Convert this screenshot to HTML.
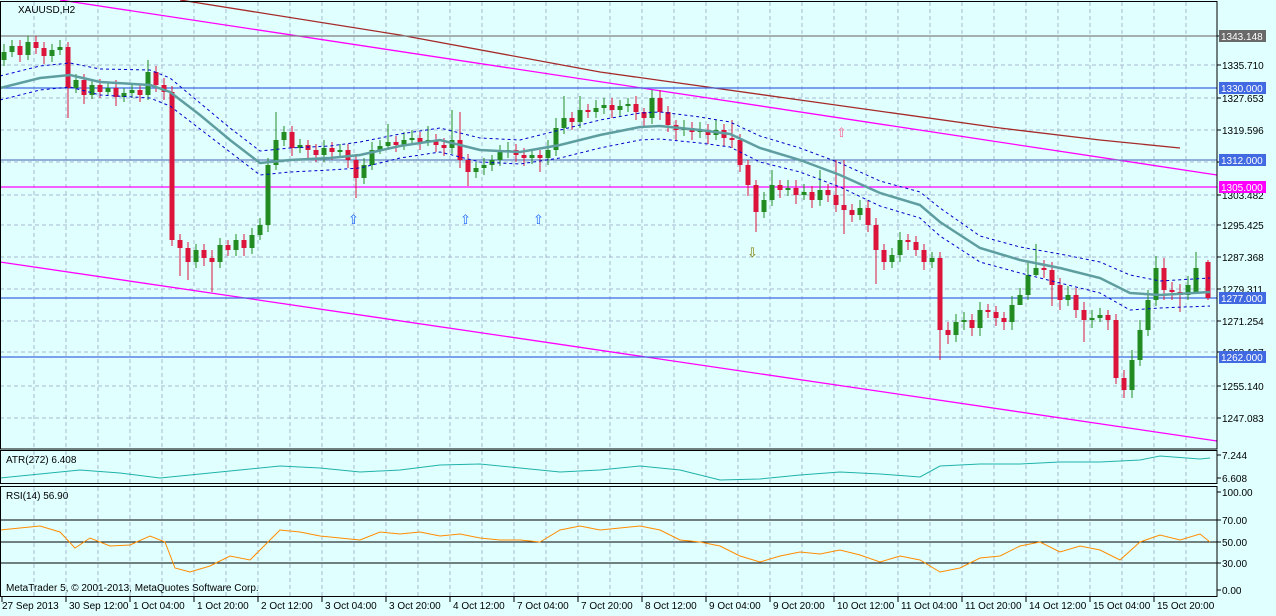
<!DOCTYPE html>
<html><head><meta charset="utf-8"><style>
html,body{margin:0;padding:0;background:#e0ffff;}
svg{display:block;font-family:"Liberation Sans",sans-serif;font-size:10px;}
</style></head><body>
<svg width="1276" height="616" xmlns="http://www.w3.org/2000/svg">
<g stroke="#a9b9d0" stroke-dasharray="4 3">
<path d="M34 2V449M66 2V449M98 2V449M130 2V449M162 2V449M194 2V449M226 2V449M258 2V449M290 2V449M322 2V449M354 2V449M386 2V449M418 2V449M450 2V449M482 2V449M514 2V449M546 2V449M578 2V449M610 2V449M642 2V449M674 2V449M706 2V449M738 2V449M770 2V449M802 2V449M834 2V449M866 2V449M898 2V449M930 2V449M962 2V449M994 2V449M1026 2V449M1058 2V449M1090 2V449M1122 2V449M1154 2V449M1186 2V449"/>
<path d="M34 451V483M66 451V483M98 451V483M130 451V483M162 451V483M194 451V483M226 451V483M258 451V483M290 451V483M322 451V483M354 451V483M386 451V483M418 451V483M450 451V483M482 451V483M514 451V483M546 451V483M578 451V483M610 451V483M642 451V483M674 451V483M706 451V483M738 451V483M770 451V483M802 451V483M834 451V483M866 451V483M898 451V483M930 451V483M962 451V483M994 451V483M1026 451V483M1058 451V483M1090 451V483M1122 451V483M1154 451V483M1186 451V483"/>
<path d="M34 487V596M66 487V596M98 487V596M130 487V596M162 487V596M194 487V596M226 487V596M258 487V596M290 487V596M322 487V596M354 487V596M386 487V596M418 487V596M450 487V596M482 487V596M514 487V596M546 487V596M578 487V596M610 487V596M642 487V596M674 487V596M706 487V596M738 487V596M770 487V596M802 487V596M834 487V596M866 487V596M898 487V596M930 487V596M962 487V596M994 487V596M1026 487V596M1058 487V596M1090 487V596M1122 487V596M1154 487V596M1186 487V596"/>
<path d="M0 65H1217M0 98H1217M0 130H1217M0 162H1217M0 195H1217M0 225H1217M0 257H1217M0 289H1217M0 321H1217M0 352H1217M0 386H1217M0 418H1217"/>
</g>
<g fill="none" stroke-width="1.3">
<line x1="60" y1="0" x2="1217" y2="175" stroke="#ff00ff"/>
<line x1="0" y1="262" x2="1217" y2="441" stroke="#ff00ff"/>
<polyline points="180,0 400,35 600,72 800,100 1000,128 1100,140 1180,148" stroke="#a52a2a"/>
<line x1="0" y1="36" x2="1217" y2="36" stroke="#808080"/>
<line x1="0" y1="88" x2="1217" y2="88" stroke="#4169e1"/>
<line x1="0" y1="160" x2="1217" y2="160" stroke="#6080c0"/>
<line x1="0" y1="187" x2="1217" y2="187" stroke="#ff00ff"/>
<line x1="0" y1="298" x2="1217" y2="298" stroke="#4169e1"/>
<line x1="0" y1="357" x2="1217" y2="357" stroke="#4169e1"/>
</g>
<!-- wicks -->
<path stroke="#228b22" fill="none" d="M4 44V66M12 40V57M28 36V60M52 44V62M60 40V55M76 74V93M92 79V99M108 82V96M124 88V102M132 84V98M148 60V100M196 244V268M220 238V268M236 234V256M252 228V254M260 218V240M268 158V232M276 112V170M284 126V146M300 139V153M324 140V162M340 144V158M364 158V184M372 142V170M380 140V154M388 124V150M404 132V150M412 130V144M428 126V146M452 110V154M476 162V178M484 158V175M492 155V171M500 145V166M508 142V158M532 149V164M548 140V165M556 118V156M564 96V134M580 96V128M596 100V118M604 98V114M620 100V116M628 98V112M652 90V124M684 120V136M700 122V138M716 120V140M764 192V218M772 170V206M788 180V196M804 184V200M820 170V206M860 200V220M892 248V268M900 232V262M932 252V268M956 314V342M964 312V330M980 302V336M1012 296V330M1020 288V302M1028 262V300M1036 244V276M1068 286V306M1092 310V328M1100 308V322M1132 350V398M1140 320V366M1148 290V336M1156 256V306M1188 276V300M1196 252V292"/>
<path stroke="#dc143c" fill="none" d="M20 40V62M36 36V54M44 42V64M68 42V118M84 74V104M100 79V98M116 80V106M140 84V102M156 66V92M164 78V100M172 86V246M180 234V276M188 242V280M204 244V266M212 250V292M228 240V256M244 234V256M292 126V156M308 140V158M316 144V162M332 142V160M348 144V168M356 154V198M396 136V152M420 132V150M436 134V152M444 138V156M460 112V168M468 154V186M516 144V162M524 148V166M540 150V172M572 112V130M588 104V118M612 98V118M636 96V120M644 108V126M660 90V120M668 106V132M676 120V140M692 122V140M708 124V144M724 124V146M732 120V148M740 134V172M748 160V196M756 180V232M780 180V198M796 180V204M812 186V208M828 184V202M836 160V212M844 160V234M852 204V222M868 200V232M876 218V284M884 244V270M908 234V250M916 236V256M924 244V270M940 252V360M948 322V344M972 314V336M988 304V318M996 306V326M1004 312V330M1044 260V278M1052 262V306M1060 278V310M1076 288V318M1084 302V342M1108 310V330M1116 314V384M1124 370V398M1164 258V300M1172 282V300M1180 284V312M1208 260V300"/>
<!-- bodies -->
<path fill="#228b22" d="M1.5 52h5v8h-5zM9.5 46h5v6h-5zM25.5 42h5v13h-5zM49.5 50h5v6h-5zM57.5 47h5v3h-5zM73.5 80h5v8h-5zM89.5 85h5v10h-5zM105.5 88h5v4h-5zM121.5 93h5v4h-5zM129.5 90h5v3h-5zM145.5 72h5v23h-5zM193.5 250h5v12h-5zM217.5 245h5v17h-5zM233.5 240h5v10h-5zM249.5 235h5v13h-5zM257.5 225h5v10h-5zM265.5 165h5v60h-5zM273.5 140h5v25h-5zM281.5 132h5v8h-5zM297.5 145h5v3h-5zM321.5 148h5v7h-5zM337.5 150h5v2h-5zM361.5 165h5v13h-5zM369.5 150h5v15h-5zM377.5 146h5v4h-5zM385.5 142h5v4h-5zM401.5 140h5v5h-5zM409.5 138h5v2h-5zM425.5 140h5v2h-5zM449.5 140h5v8h-5zM473.5 168h5v4h-5zM481.5 165h5v3h-5zM489.5 160h5v5h-5zM497.5 152h5v8h-5zM505.5 150h5v2h-5zM529.5 155h5v3h-5zM545.5 150h5v8h-5zM553.5 128h5v22h-5zM561.5 118h5v10h-5zM577.5 110h5v12h-5zM593.5 108h5v4h-5zM601.5 105h5v3h-5zM617.5 106h5v4h-5zM625.5 104h5v2h-5zM649.5 98h5v20h-5zM681.5 128h5v2h-5zM697.5 130h5v2h-5zM713.5 130h5v5h-5zM761.5 200h5v12h-5zM769.5 185h5v15h-5zM785.5 188h5v2h-5zM801.5 192h5v3h-5zM817.5 190h5v10h-5zM857.5 208h5v7h-5zM889.5 255h5v7h-5zM897.5 240h5v15h-5zM929.5 258h5v4h-5zM953.5 322h5v13h-5zM961.5 320h5v2h-5zM977.5 310h5v18h-5zM1009.5 305h5v17h-5zM1017.5 295h5v10h-5zM1025.5 275h5v20h-5zM1033.5 268h5v7h-5zM1065.5 295h5v5h-5zM1089.5 318h5v2h-5zM1097.5 315h5v3h-5zM1129.5 360h5v30h-5zM1137.5 330h5v30h-5zM1145.5 300h5v30h-5zM1153.5 268h5v32h-5zM1185.5 285h5v10h-5zM1193.5 268h5v24h-5z"/>
<path fill="#dc143c" d="M17.5 46h5v9h-5zM33.5 42h5v6h-5zM41.5 48h5v8h-5zM65.5 47h5v41h-5zM81.5 80h5v15h-5zM97.5 85h5v7h-5zM113.5 88h5v9h-5zM137.5 90h5v5h-5zM153.5 72h5v13h-5zM161.5 85h5v7h-5zM169.5 92h5v148h-5zM177.5 240h5v8h-5zM185.5 248h5v14h-5zM201.5 250h5v8h-5zM209.5 258h5v4h-5zM225.5 245h5v5h-5zM241.5 240h5v8h-5zM289.5 132h5v16h-5zM305.5 145h5v5h-5zM313.5 150h5v5h-5zM329.5 148h5v4h-5zM345.5 150h5v10h-5zM353.5 160h5v18h-5zM393.5 142h5v3h-5zM417.5 138h5v4h-5zM433.5 140h5v5h-5zM441.5 145h5v3h-5zM457.5 140h5v20h-5zM465.5 160h5v12h-5zM513.5 150h5v5h-5zM521.5 155h5v3h-5zM537.5 155h5v3h-5zM569.5 118h5v4h-5zM585.5 110h5v2h-5zM609.5 105h5v5h-5zM633.5 104h5v8h-5zM641.5 112h5v6h-5zM657.5 98h5v14h-5zM665.5 112h5v13h-5zM673.5 125h5v5h-5zM689.5 128h5v4h-5zM705.5 130h5v5h-5zM721.5 130h5v8h-5zM729.5 138h5v2h-5zM737.5 140h5v25h-5zM745.5 165h5v20h-5zM753.5 185h5v27h-5zM777.5 185h5v5h-5zM793.5 188h5v7h-5zM809.5 192h5v8h-5zM825.5 190h5v5h-5zM833.5 195h5v10h-5zM841.5 205h5v5h-5zM849.5 210h5v5h-5zM865.5 208h5v17h-5zM873.5 225h5v25h-5zM881.5 250h5v12h-5zM905.5 240h5v2h-5zM913.5 242h5v8h-5zM921.5 250h5v12h-5zM937.5 258h5v72h-5zM945.5 330h5v5h-5zM969.5 320h5v8h-5zM985.5 310h5v2h-5zM993.5 312h5v6h-5zM1001.5 318h5v4h-5zM1041.5 268h5v2h-5zM1049.5 270h5v15h-5zM1057.5 285h5v15h-5zM1073.5 295h5v15h-5zM1081.5 310h5v10h-5zM1105.5 315h5v5h-5zM1113.5 320h5v58h-5zM1121.5 378h5v12h-5zM1161.5 268h5v22h-5zM1169.5 290h5v2h-5zM1177.5 292h5v3h-5zM1205.5 262h5v36h-5z"/>
<!-- MA + bands -->
<g fill="none">
<polyline stroke="#5f9ea0" stroke-width="2.5" points="0,88 40,78 70,75 100,82 150,85 170,92 200,115 230,140 260,163 290,160 330,158 360,155 400,146 440,140 480,150 520,152 560,145 600,135 640,127 660,126 700,130 730,134 760,148 800,160 840,175 880,193 920,205 940,222 980,248 1020,260 1060,268 1100,278 1130,293 1160,295 1210,292"/>
<polyline stroke="#0000cd" stroke-dasharray="3 3" points="0,76 40,66 70,63 100,69 150,70 170,78 200,103 230,128 260,151 290,148 330,146 360,142 400,134 440,128 480,138 520,140 560,130 600,120 640,113 660,112 700,117 730,122 760,136 800,148 840,163 880,181 920,192 940,208 980,236 1020,247 1060,254 1100,262 1130,275 1160,281 1210,278"/>
<polyline stroke="#0000cd" stroke-dasharray="3 3" points="0,100 40,90 70,87 100,95 150,98 170,106 200,129 230,152 260,175 290,172 330,170 360,168 400,158 440,152 480,162 520,164 560,158 600,148 640,140 660,139 700,143 730,147 760,162 800,172 840,187 880,206 920,218 940,236 980,262 1020,273 1060,283 1100,293 1130,310 1160,308 1210,306"/>
</g>
<!-- arrows -->
<g font-size="13">
<text x="348" y="224" fill="#1e64ff">⇧</text><text x="460" y="224" fill="#1e64ff">⇧</text><text x="533" y="224" fill="#1e64ff">⇧</text>
<text x="836" y="137" fill="#ff6090">⇧</text><text x="747" y="257" fill="#808000">⇩</text>
</g>
<text x="18" y="13">XAUUSD,H2</text>
<!-- ATR -->
<polyline fill="none" stroke="#20b2aa" points="0,478 40,474 80,470 120,473 160,478 200,474 240,470 280,466 320,468 360,472 400,470 440,465 480,464 520,468 560,472 600,470 640,466 680,470 720,480 760,479 800,475 840,472 880,474 920,477 940,466 980,464 1020,464 1060,462 1100,462 1140,460 1160,456 1200,459 1210,458"/>
<text x="6" y="463">ATR(272) 6.408</text>
<!-- RSI -->
<g stroke="#000"><line x1="0" y1="520" x2="1217" y2="520"/><line x1="0" y1="542" x2="1217" y2="542"/><line x1="0" y1="563" x2="1217" y2="563"/></g>
<polyline fill="none" stroke="#ff8c00" points="0,530 20,528 40,526 60,532 75,548 90,538 110,546 130,545 150,536 165,542 175,568 190,572 210,566 230,556 250,560 270,540 280,530 300,532 320,536 340,538 360,540 380,532 400,534 420,532 440,536 460,534 480,538 500,540 520,540 540,542 560,530 580,526 600,530 620,528 640,526 660,530 680,540 700,542 720,546 740,556 760,562 780,556 800,552 820,554 840,550 860,555 880,562 900,556 920,560 940,572 960,568 980,558 1000,556 1020,546 1040,542 1060,552 1080,546 1100,550 1120,560 1140,542 1160,535 1180,540 1200,534 1210,542"/>
<text x="6" y="499">RSI(14) 56.90</text>
<text x="6" y="591">MetaTrader 5, © 2001-2013, MetaQuotes Software Corp.</text>
<!-- frames -->
<g fill="none" stroke="#000">
<rect x="0.5" y="1.5" width="1216.5" height="447.5"/>
<rect x="0.5" y="450.5" width="1216.5" height="33"/>
<rect x="0.5" y="486.5" width="1216.5" height="110"/>
<path d="M1217 36h4M1217 65h4M1217 98h4M1217 130h4M1217 162h4M1217 195h4M1217 225h4M1217 257h4M1217 289h4M1217 321h4M1217 352h4M1217 386h4M1217 418h4M1217 455h4M1217 478h4M1217 492h4M1217 520h4M1217 542h4M1217 563h4M1217 590h4"/>
<path d="M2 597v5M66 597v5M130 597v5M194 597v5M258 597v5M322 597v5M386 597v5M450 597v5M514 597v5M578 597v5M642 597v5M706 597v5M770 597v5M834 597v5M898 597v5M962 597v5M1026 597v5M1090 597v5M1154 597v5"/>
</g>
<g>
<text x="1222" y="69">1335.710</text><text x="1222" y="102">1327.653</text><text x="1222" y="134">1319.596</text><text x="1222" y="166">1311.539</text><text x="1222" y="199">1303.482</text><text x="1222" y="229">1295.425</text><text x="1222" y="261">1287.368</text><text x="1222" y="293">1279.311</text><text x="1222" y="325">1271.254</text><text x="1222" y="356">1263.197</text><text x="1222" y="390">1255.140</text><text x="1222" y="422">1247.083</text>
<text x="1222" y="459">7.244</text><text x="1222" y="482">6.608</text>
<text x="1222" y="496">100.00</text><text x="1222" y="524">70.00</text><text x="1222" y="546">50.00</text><text x="1222" y="567">30.00</text><text x="1222" y="594">0.00</text>
</g>
<rect x="1219" y="30" width="47" height="12" fill="#696969"/><text x="1221" y="40" fill="#fff">1343.148</text>
<rect x="1219" y="82" width="47" height="12" fill="#4169e1"/><text x="1221" y="92" fill="#fff">1330.000</text>
<rect x="1219" y="154" width="47" height="12" fill="#4169e1"/><text x="1221" y="164" fill="#fff">1312.000</text>
<rect x="1219" y="181" width="47" height="12" fill="#ff00ff"/><text x="1221" y="191" fill="#fff">1305.000</text>
<rect x="1219" y="292" width="47" height="12" fill="#4169e1"/><text x="1221" y="302" fill="#fff">1277.000</text>
<rect x="1219" y="351" width="47" height="12" fill="#4169e1"/><text x="1221" y="361" fill="#fff">1262.000</text>
<g>
<text x="2" y="609">27 Sep 2013</text><text x="69" y="609">30 Sep 12:00</text><text x="133" y="609">1 Oct 04:00</text><text x="197" y="609">1 Oct 20:00</text><text x="261" y="609">2 Oct 12:00</text><text x="325" y="609">3 Oct 04:00</text><text x="389" y="609">3 Oct 20:00</text><text x="453" y="609">4 Oct 12:00</text><text x="517" y="609">7 Oct 04:00</text><text x="581" y="609">7 Oct 20:00</text><text x="645" y="609">8 Oct 12:00</text><text x="709" y="609">9 Oct 04:00</text><text x="773" y="609">9 Oct 20:00</text><text x="837" y="609">10 Oct 12:00</text><text x="901" y="609">11 Oct 04:00</text><text x="965" y="609">11 Oct 20:00</text><text x="1029" y="609">14 Oct 12:00</text><text x="1093" y="609">15 Oct 04:00</text><text x="1157" y="609">15 Oct 20:00</text>
</g>
</svg>
</body></html>
